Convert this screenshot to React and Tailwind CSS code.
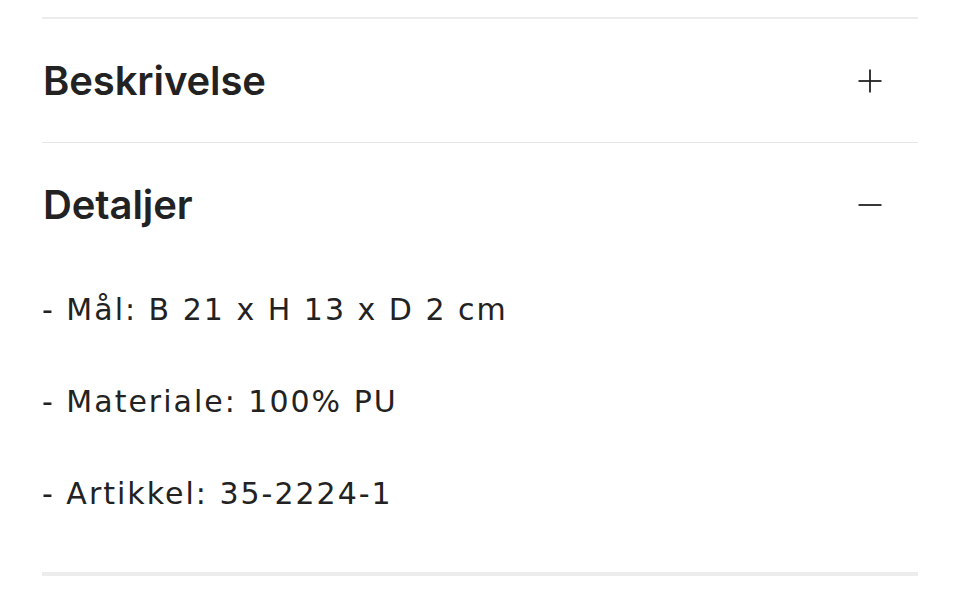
const DETAILS = [
  '- Mål: B 21 x H 13 x D 2 cm',
  '- Materiale: 100% PU',
  '- Artikkel: 35-2224-1',
]

function Toggle({ open }) {
  return (
    <svg width="24" height="24" viewBox="0 0 24 24" className="mr-[36px] shrink-0" fill="none" stroke="#222" strokeWidth="1.8">
      <path d="M0.5 12h23" />
      {!open && <path d="M12 0.5v23" />}
    </svg>
  )
}

export default function App() {
  return (
    <div className="bg-white w-[960px] h-[596px] overflow-hidden pt-[17px] text-[#222]" style={{ fontFamily: 'Inter, "Noto Sans", sans-serif' }}>
      <div className="mx-[42px] border-t-2 border-[#ececec]">
        {/* Beskrivelse */}
        <div className="h-[124px] flex items-center justify-between border-b border-[#e6e6e6]">
          <h2 className="pl-px text-[40px] font-semibold tracking-[-0.1px]">Beskrivelse</h2>
          <Toggle open={false} />
        </div>

        {/* Detaljer */}
        <div className="h-[124px] flex items-center justify-between">
          <h2 className="pl-px text-[40px] font-semibold tracking-[-0.1px]">Detaljer</h2>
          <Toggle open />
        </div>
        <div className="pt-[20px] pb-[56px] border-b-4 border-[#ececec] space-y-[47px]" style={{ fontFamily: '"DejaVu Sans", sans-serif' }}>
          {DETAILS.map(line => (
            <p key={line} className="text-[30px] leading-[45px] tracking-[2px]">{line}</p>
          ))}
        </div>
      </div>
    </div>
  )
}
